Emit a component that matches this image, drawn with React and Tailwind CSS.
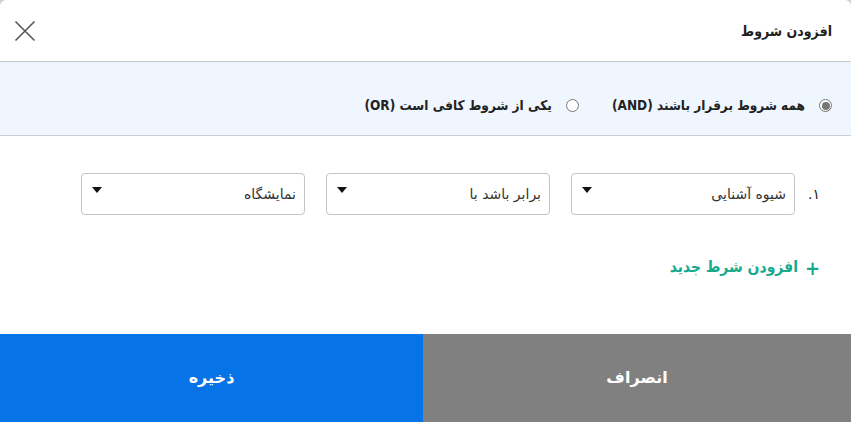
import React from "react";

const Caret = () => (
  <svg width="12" height="8" viewBox="0 0 12 8" className="shrink-0">
    <path d="M1 1 L11 1 L6 7 Z" fill="#111" />
  </svg>
);

const Select = ({ label }) => (
  <div className="w-[224px] h-[42px] border border-[#c4c4c4] rounded-[4px] bg-white flex items-start justify-between pr-[8px] pl-[9px]">
    <span className="text-[14px] text-[#333] mt-[10px]">{label}</span>
    <div className="mt-[12px]"><Caret /></div>
  </div>
);

const Radio = ({ checked }) => (
  <span className="w-[13px] h-[13px] rounded-full border border-[#777] bg-white flex items-center justify-center shrink-0">
    {checked && <span className="w-[8px] h-[8px] rounded-full bg-[#777]" />}
  </span>
);

const cond = { fontFamily: '"DejaVu Sans Condensed", "DejaVu Sans", sans-serif' };

export default function App() {
  return (
    <div className="w-[851px] h-[422px] bg-[#cfcfcf] overflow-hidden" style={{ fontFamily: '"DejaVu Sans", "Noto Sans", sans-serif' }}>
      <div dir="rtl" className="w-full h-full bg-white rounded-t-[6px] flex flex-col">
        <div className="h-[62px] border-b border-[#c9c9c9] flex items-center justify-between pr-[19px] pl-[14px] shrink-0">
          <span className="text-[14px] font-bold text-[#222] mt-[2px]" style={cond}>افزودن شروط</span>
          <svg width="22" height="22" viewBox="0 0 22 22">
            <path d="M1.5 1.5 L20.5 20.5 M20.5 1.5 L1.5 20.5" stroke="#555" strokeWidth="1.6" />
          </svg>
        </div>
        <div className="h-[74px] bg-[#f0f6fe] border-b border-[#cfcfcf] flex items-center pr-[19px] shrink-0 pt-[14px]">
          <label className="flex items-center gap-[14px]">
            <Radio checked />
            <span className="text-[13.5px] font-bold text-[#222]" style={cond}>همه شروط برقرار باشند (AND)</span>
          </label>
          <label className="flex items-center gap-[14px] mr-[33px]">
            <Radio />
            <span className="text-[13.5px] font-bold text-[#222]" style={cond}>یکی از شروط کافی است (OR)</span>
          </label>
        </div>
        <div className="flex items-center pr-[31px] mt-[37px] gap-[13px]">
          <span className="text-[14px] text-[#222] w-[12px]">۱.</span>
          <div className="flex gap-[21px]">
            <Select label="شیوه آشنایی" />
            <Select label="برابر باشد با" />
            <Select label="نمایشگاه" />
          </div>
        </div>
        <div className="flex items-center pr-[31px] mt-[41px] gap-[7px] text-[#17a98d] font-bold text-[15.5px]" style={cond}>
          <span className="text-[20px] leading-none font-black">+</span>
          <span>افزودن شرط جدید</span>
        </div>
        <div className="mt-auto h-[88px] flex shrink-0">
          <button className="flex-1 bg-[#808080] text-white font-bold text-[16px] flex items-center justify-center">انصراف</button>
          <button className="w-[423px] bg-[#0674e6] text-white font-bold text-[16px] flex items-center justify-center">ذخیره</button>
        </div>
      </div>
    </div>
  );
}
